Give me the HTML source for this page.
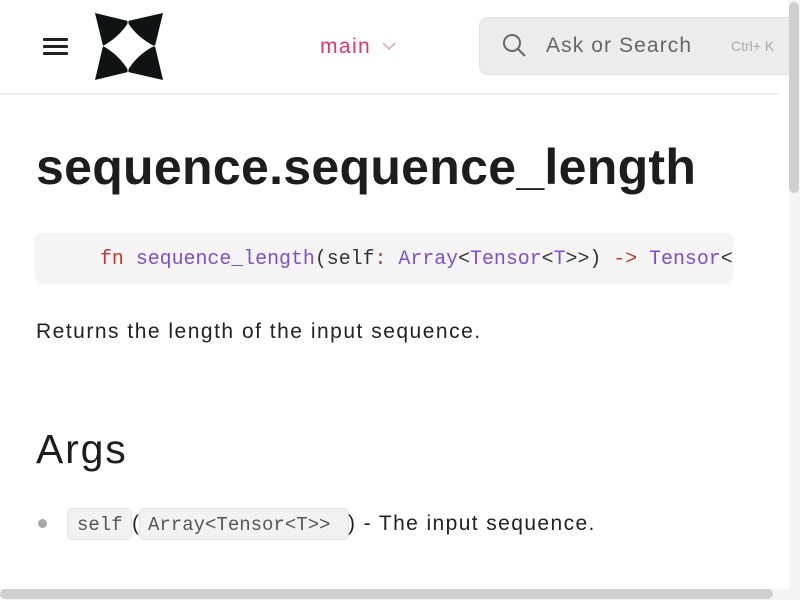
<!DOCTYPE html>
<html><head><meta charset="utf-8"><style>
*{margin:0;padding:0;box-sizing:border-box}
html,body{width:800px;height:600px;overflow:hidden;background:#fff;font-family:"Liberation Sans",sans-serif;color:#1d1d1f}
.a{position:absolute;white-space:nowrap}
.mono{font-family:"Liberation Mono",monospace}
</style></head><body>
<div class="a" style="left:0;top:93px;width:779px;height:2px;background:#f0f0f0"></div>
<div class="a" style="left:43px;top:38px;width:25px;height:3px;background:#222;border-radius:1px"></div>
<div class="a" style="left:43px;top:45px;width:25px;height:3px;background:#222;border-radius:1px"></div>
<div class="a" style="left:43px;top:52px;width:25px;height:3px;background:#222;border-radius:1px"></div>
<svg class="a" style="left:94px;top:12px" width="70" height="69" viewBox="0 0 70 69">
<path d="M1 1 L34 9 L69 1 L61 34 L69 68 L34 60 L1 68 L9 34 Z" fill="#111214"/>
<path d="M34 11 Q43 25 60 34 Q43 43 34 58 Q25 43 9 34 Q25 25 34 11Z" fill="#fff"/>
<path d="M34 8 L34 61 M8 34 L62 34" stroke="#fff" stroke-width="1"/>
</svg>
<div class="a" style="left:320px;top:35px;font-size:21px;letter-spacing:1.4px;color:#e8336d">main</div>
<svg class="a" style="left:381px;top:41px" width="16" height="10"><path d="M2 2 L8 8 L14 2" fill="none" stroke="#f29bb5" stroke-width="1.5"/></svg>
<div class="a" style="left:479px;top:17px;width:320px;height:58px;background:#ececec;border:1px solid #e2e2e2;border-radius:9px"></div>
<svg class="a" style="left:502px;top:33px" width="26" height="26"><circle cx="10" cy="10" r="8" fill="none" stroke="#666" stroke-width="2"/><path d="M16 16 L23 23" stroke="#666" stroke-width="2"/></svg>
<div class="a" style="left:546px;top:34px;font-size:21px;letter-spacing:1.1px;color:#666">Ask or Search</div>
<div class="a" style="left:731px;top:38px;font-size:14px;color:#aaa">Ctrl+ K</div>
<div class="a" style="left:36px;top:138px;font-size:50px;font-weight:bold;letter-spacing:0.3px;color:#1d1d1f">sequence.sequence_length</div>
<div class="a" style="left:35px;top:233px;width:698px;height:51px;background:#f4f4f4;border-radius:7px;overflow:hidden">
<div class="a mono" style="left:65px;top:14px;font-size:19.9px;color:#333"><span style="color:#c0392b">fn</span> <span style="color:#7b4fd6">sequence_length</span>(self<span style="color:#c0392b">:</span> <span style="color:#7b4fd6">Array</span>&lt;<span style="color:#7b4fd6">Tensor</span>&lt;<span style="color:#7b4fd6">T</span>&gt;&gt;) <span style="color:#c0392b">-&gt;</span> <span style="color:#7b4fd6">Tensor</span>&lt;</div>
</div>
<div class="a" style="left:36px;top:320px;font-size:21px;letter-spacing:1.5px;color:#222">Returns the length of the input sequence.</div>
<div class="a" style="left:36px;top:426px;font-size:41px;color:#1d1d1f;letter-spacing:1.8px">Args</div>
<div class="a" style="left:38px;top:519px;width:9px;height:9px;border-radius:50%;background:#a8a8a8"></div>
<div class="a mono" style="left:67px;top:508px;width:65px;height:32px;background:#f2f2f2;border:1px solid #e4e4e4;border-radius:5px;font-size:19px;color:#555;padding:5px 0 0 9px">self</div>
<div class="a" style="left:132px;top:512px;font-size:21px;color:#222">(</div>
<div class="a mono" style="left:139px;top:508px;width:210px;height:32px;background:#f2f2f2;border:1px solid #e4e4e4;border-radius:5px;font-size:19px;color:#555;padding:5px 0 0 8px">Array&lt;Tensor&lt;T&gt;&gt;</div>
<div class="a" style="left:348px;top:512px;font-size:21px;letter-spacing:1.4px;color:#222">) - The input sequence.</div>
<div class="a" style="left:789px;top:0;width:11px;height:589px;background:#f5f5f5"></div>
<div class="a" style="left:789px;top:2px;width:10px;height:191px;background:#cfcfcf;border-radius:5px"></div>
<div class="a" style="left:0;top:589px;width:800px;height:11px;background:#f5f5f5"></div>
<div class="a" style="left:0;top:589px;width:773px;height:10px;background:#cfcfcf;border-radius:5px"></div>
</body></html>
